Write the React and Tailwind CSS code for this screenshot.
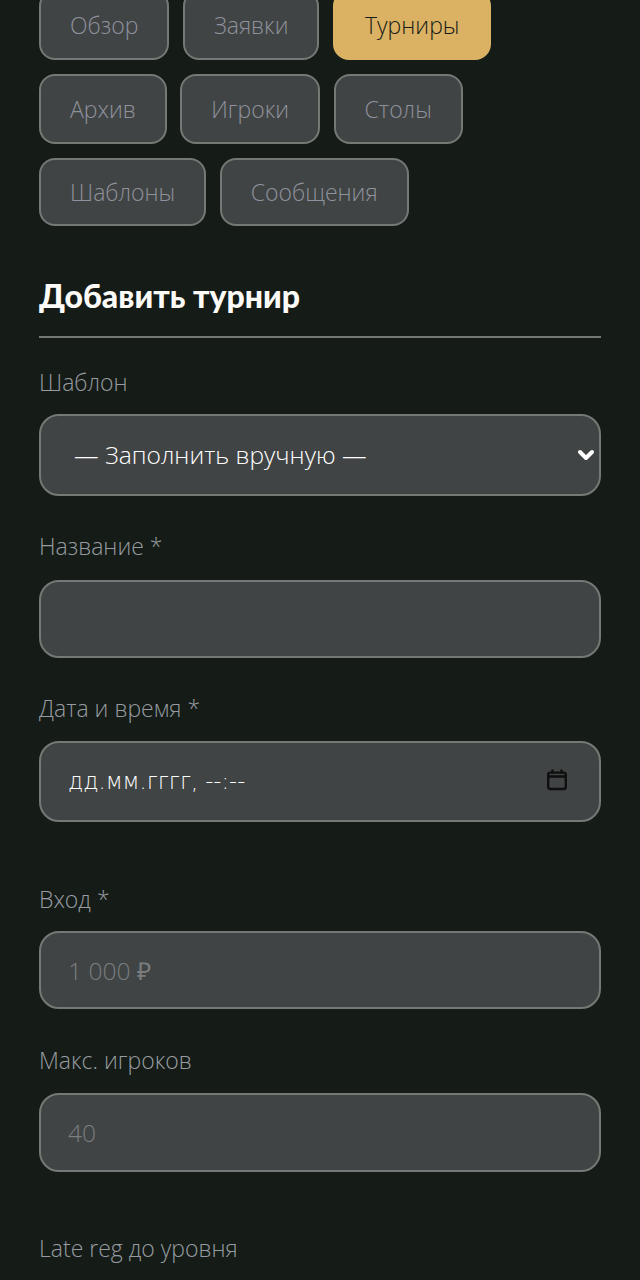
import React from 'react';
import { ChevronDown } from 'lucide-react';

const tabs = ['Обзор', 'Заявки', 'Турниры', 'Архив', 'Игроки', 'Столы', 'Шаблоны', 'Сообщения'];

const fieldBox = 'w-full rounded-[20px] border-2 border-[#747975] bg-[#414444] text-[24.6px] outline-none';

function Label({ children, className }) {
  return (
    <label className={`block h-8 text-[23px] leading-8 font-light text-[#979ba1] ${className}`}>
      {children}
    </label>
  );
}

function TextField({ placeholder, className }) {
  return (
    <input
      placeholder={placeholder}
      className={`${fieldBox} h-[78px] px-[27px] font-light text-white placeholder:text-[#797d7f] ${className || ''}`}
    />
  );
}

export default function App() {
  return (
    <div className="h-[1280px] overflow-hidden bg-[#151b16] px-[39px] font-['Open_Sans',sans-serif]">
      <div className="-mt-[10px] flex flex-wrap gap-x-[13.5px] gap-y-[14px]">
        {tabs.map((tab, i) => (
          <button
            key={tab}
            className={`rounded-[16px] border-2 text-[23px] font-light ${i > 5 ? 'h-[68px]' : 'h-[70px]'} ${
              tab === 'Турниры'
                ? 'border-[#dbb263] bg-[#dbb263] px-[30px] text-[#151b16]'
                : 'border-[#747975] bg-[#414444] px-[29px] text-[#8f919c]'
            }`}
          >
            {tab}
          </button>
        ))}
      </div>

      <h2 className="mt-[50px] h-10 font-['Lato',sans-serif] text-[32px] leading-10 font-black text-[#fbfaf6]">
        Добавить турнир
      </h2>
      <div className="mt-[20px] h-0.5 bg-[#747975]" />

      <Label className="mt-[28px] mb-4">Шаблон</Label>
      <div className="relative">
        <select className={`${fieldBox} h-[82px] appearance-none px-[33px] font-light text-white`}>
          <option>— Заполнить вручную —</option>
        </select>
        <ChevronDown
          size={24}
          strokeWidth={4}
          className="pointer-events-none absolute top-1/2 right-[3px] -translate-y-1/2 text-white"
        />
      </div>

      <Label className="mt-[34px] mb-[18px]">Название *</Label>
      <TextField />

      <Label className="mt-[34px] mb-[17px]">Дата и время *</Label>
      <div className={`${fieldBox} flex h-[81px] items-center justify-between pr-[30px] pl-[27px]`}>
        <span className="font-['DejaVu_Sans',sans-serif] text-[22.5px] font-extralight text-white">дд.мм.гггг, --:--</span>
        <svg className="mb-1" width="24" height="24" viewBox="0 0 24 24" fill="none" stroke="#0f0f0f" strokeWidth="2.4">
          <rect x="3.2" y="4.6" width="17.6" height="16.4" rx="2" />
          <path d="M3.2 8.5h17.6" strokeWidth="2.6" />
          <path d="M7.5 1.5v4M16.5 1.5v4" />
        </svg>
      </div>

      <Label className="mt-[61px] mb-4">Вход *</Label>
      <TextField placeholder="1 000 ₽" />

      <Label className="mt-[35px] mb-[17px]">Макс. игроков</Label>
      <TextField placeholder="40" className="h-[79px]" />

      <Label className="mt-[60px]">Late reg до уровня</Label>
    </div>
  );
}
